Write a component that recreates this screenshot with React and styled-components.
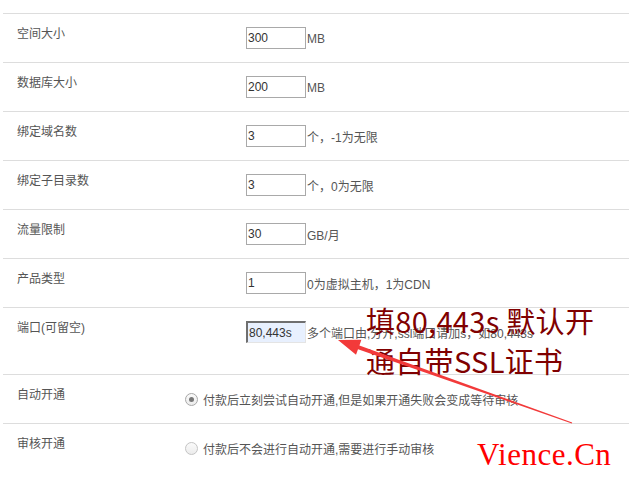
import React from 'react'
import styled, { createGlobalStyle } from 'styled-components'

const GlobalStyle = createGlobalStyle`
  html, body {
    margin: 0;
    padding: 0;
    background: #fff;
  }
  body {
    font-family: 'Liberation Sans', 'Noto Sans CJK SC', sans-serif;
    font-size: 12px;
    color: #555;
  }
`

const fields = [
  { label: '空间大小', value: '300', unit: 'MB' },
  { label: '数据库大小', value: '200', unit: 'MB' },
  { label: '绑定域名数', value: '3', unit: '个，-1为无限' },
  { label: '绑定子目录数', value: '3', unit: '个，0为无限' },
  { label: '流量限制', value: '30', unit: 'GB/月' },
  { label: '产品类型', value: '1', unit: '0为虚拟主机，1为CDN' },
  {
    label: '端口(可留空)',
    value: '80,443s',
    unit: '多个端口由,分开,ssl端口请加s，如80,443s',
    filled: true,
    tall: true,
  },
]

const options = [
  { label: '自动开通', text: '付款后立刻尝试自动开通,但是如果开通失败会变成等待审核', checked: true },
  { label: '审核开通', text: '付款后不会进行自动开通,需要进行手动审核', checked: false },
]

const App = () => {
  return (
    <Page>
      <GlobalStyle />
      <Form>
        {fields.map((f) => (
          <Row key={f.label} $labelWidth={243} $tall={f.tall}>
            <Label>{f.label}</Label>
            <Value>
              <NumInput $filled={f.filled} defaultValue={f.value} readOnly />
              <Unit>{f.unit}</Unit>
            </Value>
          </Row>
        ))}
        {options.map((o) => (
          <Row key={o.label} $labelWidth={179}>
            <Label>{o.label}</Label>
            <Value>
              <RadioDot $checked={o.checked} />
              <RadioText>{o.text}</RadioText>
            </Value>
          </Row>
        ))}
      </Form>

      <Note>
        填80,443s 默认开
        <br />
        通自带SSL证书
      </Note>

      <Arrow width='629' height='487' viewBox='0 0 629 487'>
        <polygon
          points='338,340 361.4,339.8 359.4,345.4 572.2,422.5 571.8,423.5 358,349.2 356,354.8'
          fill='#f23a3a'
        />
      </Arrow>

      <Watermark>Vience.Cn</Watermark>
    </Page>
  )
}

const Page = styled.div`
  position: relative;
  width: 629px;
  height: 487px;
  padding: 13px 0 0 3px;
  box-sizing: border-box;
  overflow: hidden;
`

const Form = styled.div`
  display: flex;
  flex-direction: column;
`

const Row = styled.div`
  display: grid;
  grid-template-columns: ${(p) => p.$labelWidth}px 1fr;
  height: ${(p) => (p.$tall ? 67 : 49)}px;
  box-sizing: border-box;
  border-top: 1px solid #ddd;
`

const Label = styled.div`
  padding: 12px 0 0 14px;
  line-height: 17px;
  font-size: 12px;
  color: #555;
`

const Value = styled.div`
  display: flex;
  align-items: center;
  align-self: start;
  margin-top: 13px;
  height: 22px;
`

const NumInput = styled.input`
  width: 60px;
  height: 22px;
  box-sizing: border-box;
  margin: 0;
  padding: 0 0 0 1px;
  font-family: 'Liberation Sans', sans-serif;
  font-size: 12px;
  color: #333;
  outline: none;
  background: ${(p) => (p.$filled ? '#e8f0fe' : '#fff')};
  border-style: solid;
  border-width: ${(p) => (p.$filled ? '2px 1px 1px 2px' : '1px')};
  border-color: ${(p) =>
    p.$filled ? '#6f6f6f #e4e4e4 #e4e4e4 #6f6f6f' : '#a9a9a9'};
`

const Unit = styled.span`
  margin: 1px 0 0 1px;
  font-size: 12px;
  color: #555;
  white-space: nowrap;
`

const RadioDot = styled.span`
  position: relative;
  width: 13px;
  height: 13px;
  box-sizing: border-box;
  border-radius: 50%;
  border: 1px solid ${(p) => (p.$checked ? '#a8a8a8' : '#c4c4c4')};
  background: linear-gradient(#fafafa, #ececec);
  margin-left: 3px;

  &::after {
    content: '';
    position: absolute;
    left: 3px;
    top: 3px;
    width: 5px;
    height: 5px;
    border-radius: 50%;
    background: #777;
    display: ${(p) => (p.$checked ? 'block' : 'none')};
  }
`

const RadioText = styled.span`
  margin-left: 5px;
  font-size: 12px;
  color: #555;
  white-space: nowrap;
`

const Note = styled.div`
  position: absolute;
  left: 366px;
  top: 300px;
  font-family: 'Noto Sans CJK SC', sans-serif;
  font-size: 29px;
  line-height: 40px;
  letter-spacing: 0.3px;
  color: #800000;
  white-space: nowrap;
`

const Arrow = styled.svg`
  position: absolute;
  left: 0;
  top: 0;
  pointer-events: none;
`

const Watermark = styled.div`
  position: absolute;
  left: 477px;
  top: 438px;
  font-family: 'Liberation Serif', serif;
  font-size: 31px;
  line-height: 34px;
  letter-spacing: 0.5px;
  color: #ff0000;
  white-space: nowrap;
`

export default App
